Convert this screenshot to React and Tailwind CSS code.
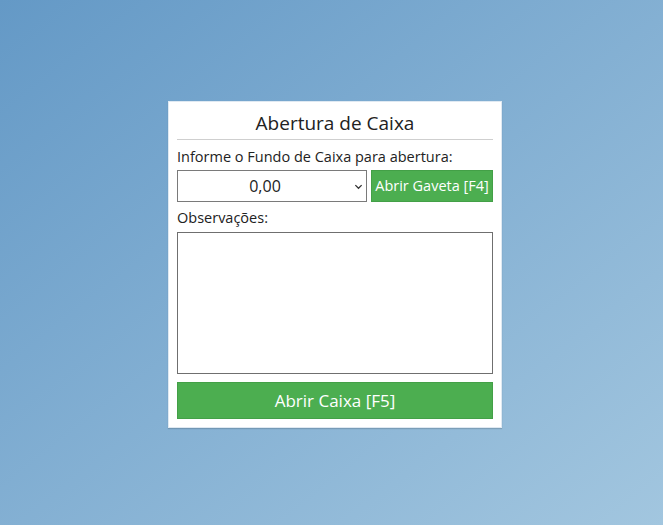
import React, { useState } from 'react';

const App = () => {
  const [fundo, setFundo] = useState('0,00');
  const [obs, setObs] = useState('');

  return (
    <div
      className="w-[663px] h-[525px] pt-[101px] pl-[168px] bg-gradient-to-br from-[#6499c6] to-[#a2c6df]"
      style={{ fontFamily: '"Open Sans", "Noto Sans", sans-serif' }}
    >
      <div className="w-[334px] bg-white border border-[#dfe9f2] shadow-[0_1px_1px_rgba(0,0,0,0.15)] px-[8px] pt-[7px] pb-[8px]">
        <h1 className="text-center text-[19px] leading-[28px] text-[#222] pb-[2px] border-b border-[#cfcfcf]">
          Abertura de Caixa
        </h1>
        <p className="mt-[7px] text-[14.5px] leading-[20px] text-[#222]">Informe o Fundo de Caixa para abertura:</p>
        <div className="flex gap-[4px] mt-[3px]">
          <div className="relative w-[190px]">
            <select
              value={fundo}
              onChange={(e) => setFundo(e.target.value)}
              className="appearance-none w-full h-[32px] border border-[#7a7a7a] bg-white text-center text-[16px] text-[#222] pr-[14px] focus:outline-none"
            >
              <option value="0,00">0,00</option>
            </select>
            <svg className="absolute right-[4px] top-[12px] w-[9px] h-[9px] pointer-events-none" viewBox="0 0 10 10" fill="none" stroke="#333" strokeWidth="1.4">
              <path d="M1.5 3.5 L5 7 L8.5 3.5" />
            </svg>
          </div>
          <button className="flex-1 h-[32px] bg-[#4cae50] border border-[#43a047] text-white text-[14.5px]">
            Abrir Gaveta [F4]
          </button>
        </div>
        <p className="mt-[6px] text-[14.5px] leading-[20px] text-[#222]">Observações:</p>
        <textarea
          value={obs}
          onChange={(e) => setObs(e.target.value)}
          className="block w-full h-[142px] mt-[4px] border border-[#6f6f6f] resize-none focus:outline-none"
        />
        <button className="mt-[8px] w-full h-[37px] bg-[#4cae50] border border-[#43a047] text-white text-[17px]">
          Abrir Caixa [F5]
        </button>
      </div>
    </div>
  );
};

export default App;
